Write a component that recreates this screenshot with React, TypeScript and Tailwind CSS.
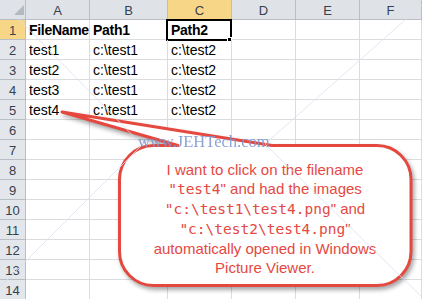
import React from "react";

// Excel 2010 style sheet with a red callout pointing at "test4".
const COLS = ["A", "B", "C", "D", "E", "F"];
const DATA: string[][] = [
  ["FileName", "Path1", "Path2"],
  ["test1", "c:\\test1", "c:\\test2"],
  ["test2", "c:\\test1", "c:\\test2"],
  ["test3", "c:\\test1", "c:\\test2"],
  ["test4", "c:\\test1", "c:\\test2"],
];
const ROWS = Array.from({ length: 14 }, (_, i) => i + 1);

const head =
  "h-[20px] border-r border-b border-[#b9bec5] pt-[3px] text-center text-[13px] leading-[16px] text-[#36404e]";

function Corner() {
  return (
    <div className="relative h-[20px] border-r border-b border-[#b9bec5] bg-[#dfe3e8]">
      <svg width="26" height="20" className="absolute inset-0">
        <polygon points="14,15 24,15 24,5" fill="#b4b9c0" />
      </svg>
    </div>
  );
}

function Callout() {
  const d =
    "M 272 145.5 L 377 145.5 A 34 34 0 0 1 411 179.5 L 411 251.5 A 34 34 0 0 1 377 285.5 " +
    "L 153.5 285.5 A 34 34 0 0 1 119.5 251.5 L 119.5 179.5 A 34 34 0 0 1 153.5 145.5 L 178 145.5 L 62 112 Z";
  return (
    <>
      <svg
        width="422"
        height="299"
        className="pointer-events-none absolute inset-0 drop-shadow-[2px_3px_2px_rgba(0,0,0,0.35)]"
      >
        <path d={d} fill="#ffffff" stroke="#e5483f" strokeWidth="3" strokeLinejoin="round" />
      </svg>
      <div className="absolute left-[121px] top-[160px] w-[288px] text-center text-[15px] leading-[19px] text-[#e5483f] font-['Liberation_Sans',sans-serif]">
        <div>I want to click on the filename</div>
        <div>
          <span className="font-['DejaVu_Sans_Mono',monospace] text-[14.5px]">"test4</span>" and had the images
        </div>
        <div>
          <span className="font-['DejaVu_Sans_Mono',monospace] text-[14.5px]">"c:\test1\test4.png</span>" and
        </div>
        <div>
          <span className="font-['DejaVu_Sans_Mono',monospace] text-[14.5px]">"c:\test2\test4.png</span>"
        </div>
        <div>automatically opened in Windows</div>
        <div>Picture Viewer.</div>
      </div>
    </>
  );
}

function Watermark() {
  return (
    <>
      <svg width="422" height="299" className="pointer-events-none absolute inset-0">
        <g stroke="#dcdff0" strokeWidth="0.8" fill="none">
          <line x1="0" y1="0" x2="142" y2="145" />
          <line x1="0" y1="287" x2="142" y2="145" />
          <line x1="265" y1="144" x2="422" y2="297" />
          <line x1="265" y1="144" x2="422" y2="5" />
        </g>
      </svg>
      <span className="pointer-events-none absolute left-[138px] top-[134px] text-[16.5px] leading-none text-[#7f98cf] opacity-90 font-['Liberation_Serif',serif]">
        www.JEHTech.com
      </span>
    </>
  );
}

export default function App() {
  return (
    <div className="relative h-[299px] w-[422px] overflow-hidden bg-white font-['Liberation_Sans',sans-serif]">
      <div className="grid grid-cols-[26px_64px_78px_64px_64px_64px_1fr]">
        <Corner />
        {COLS.map((c) => (
          <div key={c} className={`${head} ${c === "C" ? "bg-[#f7d687]" : "bg-[#dfe3e8]"}`}>
            {c}
          </div>
        ))}
        {ROWS.map((r) => (
          <React.Fragment key={r}>
            <div className={`${head} ${r === 1 ? "bg-[#f7d687]" : "bg-[#e3e6ea]"}`}>{r}</div>
            {COLS.map((c, ci) => {
              const val = DATA[r - 1]?.[ci] ?? "";
              const selected = r === 1 && c === "C";
              return (
                <div
                  key={c}
                  className={`relative h-[20px] overflow-visible whitespace-nowrap border-r border-b border-[#dadcdd] pl-[3px] pt-[2px] text-[14px] leading-[17px] text-black ${
                    r === 1 ? "font-bold tracking-[-0.3px]" : ""
                  }`}
                >
                  {val}
                  {selected && (
                    <div className="absolute left-[-2px] top-[-1px] h-[22px] w-[66px] border-2 border-black">
                      <div className="absolute left-[59px] top-[16px] h-[5px] w-[5px] border border-white bg-black" />
                    </div>
                  )}
                </div>
              );
            })}
          </React.Fragment>
        ))}
      </div>
      <Callout />
      <Watermark />
    </div>
  );
}
